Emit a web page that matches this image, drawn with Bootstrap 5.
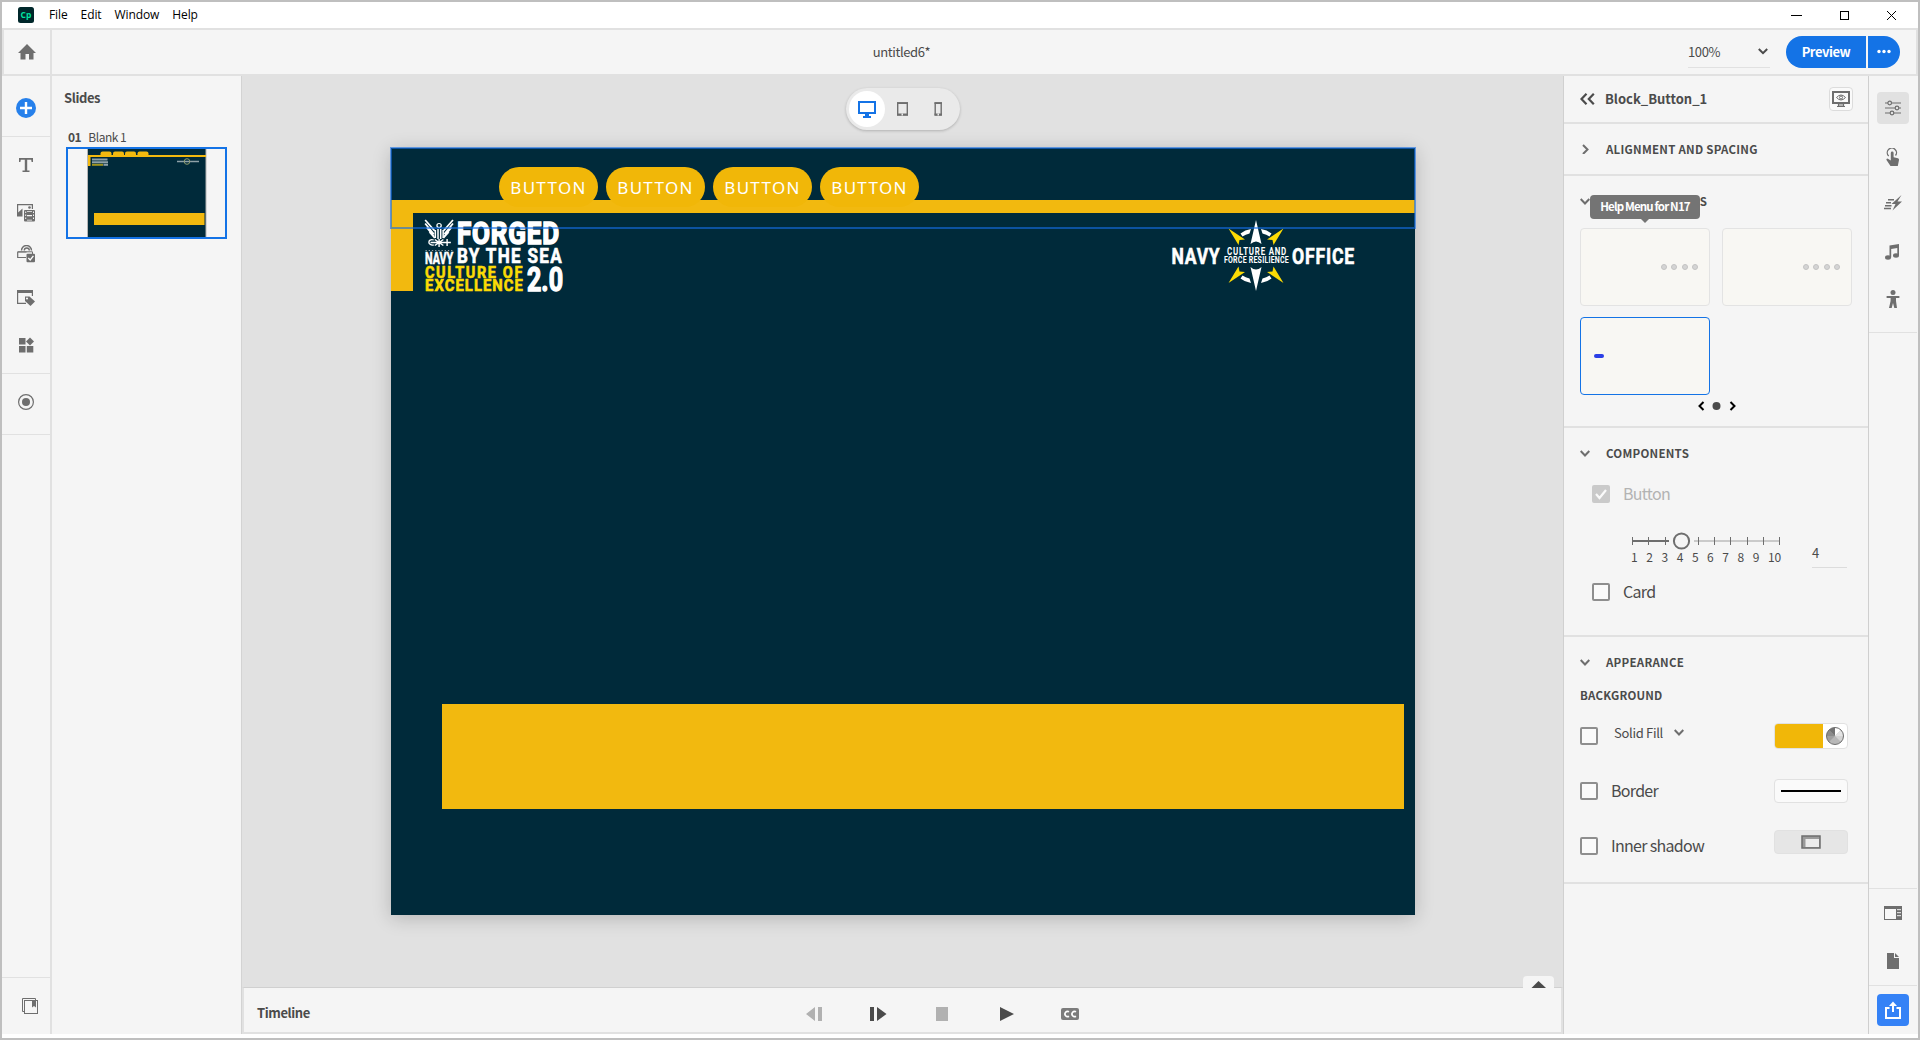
<!DOCTYPE html>
<html lang="en">
<head>
<meta charset="utf-8">
<title>untitled6*</title>
<link href="https://cdn.jsdelivr.net/npm/bootstrap@5.3.0/dist/css/bootstrap.min.css" rel="stylesheet">
<style>
:root{--pane:#f5f5f5;--line:#e1e1e1;--ink:#4b4b4b;--icon:#6e6e6e;--blue:#1473e6;--gold:#f2b90f;--navy:#002a3a}
body{font-family:"Noto Sans CJK SC","Noto Sans",sans-serif;font-size:13px;line-height:20px;color:var(--ink);background:#bfbfbf;overflow:hidden}
svg{display:block;flex:none}
.app{width:1920px;height:1040px;border:2px solid #bfbfbf;background:#fff}
.titlebar{height:26px;padding-left:16px;font-family:"Open Sans","Noto Sans",sans-serif;font-size:12px;color:#000}
.titlebar .menus{margin-left:15px}
.titlebar .menus span{letter-spacing:-.1px;padding-bottom:1px;margin-right:13px}
.winbtns{gap:38px;padding-right:22px}
.toolbar{height:48px;border:2px solid var(--line);background:var(--pane)}
.homecell{width:48px;border-right:2px solid var(--line)}
.docname{padding-left:63px;letter-spacing:-.4px}
.zoomsel{width:82px;height:31px;border-bottom:1px solid var(--line);margin-right:16px;letter-spacing:-.35px}
.zoomsel svg{margin-right:2px}
.btn-preview{height:32px;border-radius:16px 0 0 16px;width:80px;background:var(--blue);color:#fff;font-weight:700;font-size:13px;letter-spacing:-.45px;padding:0;border:0;margin-right:2px}
.btn-more{height:32px;border-radius:0 16px 16px 0;width:32px;background:var(--blue);border:0;padding:0}
.work{height:958px;background:var(--pane)}
.rail{width:50px;flex:none;color:var(--icon)}
.rail hr{margin:0;border:0;height:1px;background:var(--line);opacity:1;flex:none}
.rail .tool{height:40px;flex:none;display:flex;align-items:center;justify-content:center}
.g1{margin-top:1px!important}.g4{margin-top:4px!important}.g6{margin-top:6px!important}.g7{margin-top:7px!important}.g8{margin-top:8px!important}.g9{margin-top:9px!important}.g12{margin-top:12px!important}.g13{margin-top:13px!important}
.rail-l{border-right:2px solid var(--line)}
.rail-r{border-left:1px solid #cfcfcf;padding-right:1px}
.tool .on{background:var(--line);border-radius:4px;width:32px;height:32px}
.tool .share{background:#3582f6;border-radius:4px;width:32px;height:32px}
.slides{width:190px;flex:none;border-right:1px solid #d3d3d3;padding-top:12px}
.slides h6{font-size:13px;font-weight:700;line-height:20px;margin:0 0 20px 12px;letter-spacing:-.4px}
.slides .cap{font-size:12px;margin-left:16px;line-height:18px;height:19px;letter-spacing:-.5px}
.slides .cap b{margin-right:5px}
.thumb{width:161px;height:92px;border:2px solid var(--blue);margin-left:14px}
.stage{width:1322px;flex:none;background:#e1e1e1;border-right:1px solid #d0d0d0}
.devices{width:114px;height:42px;border-radius:21px;background:#eaeaea;box-shadow:0 1px 3px rgba(0,0,0,.22);margin:12px 0 0 604px;padding-left:3px}
.devices .cur{width:36px;height:36px;border-radius:18px;background:#fff}
.slide{width:1024px;height:767px;margin:18px 0 0 149px;background:var(--navy);position:relative;box-shadow:0 3px 18px rgba(0,0,0,.2)}
.slide>*{position:absolute}
.bar-top{left:0;top:52px;width:1024px;height:13px;background:var(--gold)}
.bar-side{left:0;top:52px;width:22px;height:91px;background:var(--gold)}
.bar-low{left:51px;top:556px;width:962px;height:105px;background:var(--gold)}
.tabs{left:108px;top:19px;gap:8px}
.pill{width:99px;height:40px;border-radius:20px;background:#f1b708;color:#fff;font-family:"Noto Sans",sans-serif;font-size:17px;letter-spacing:1.3px;line-height:41px;text-align:center}
.sel{left:-1px;top:-1px;width:1026px;height:82px;border:2px solid rgba(20,110,230,.6)}
.brand{left:0;top:0}
.tl-wrap{height:47px;position:relative;border:2px solid var(--line);border-top:1px solid #d0d0d0;background:var(--pane);margin-top:auto}
.tl-wrap b{position:absolute;left:13px;top:15px;font-size:13px;letter-spacing:-.4px}
.transport{position:absolute;left:562px;top:15px}
.tl-tab{position:absolute;left:1279px;top:-12px;width:31px;height:12px;background:var(--pane);border-radius:4px 4px 0 0}
.props{width:304px;flex:none;position:relative}
.sect{border-bottom:2px solid var(--line);padding-left:16px}
.s-head{height:48px}.s-style{height:252px}.s-comp{height:209px}.s-app{height:247px}
.obj{font-size:13px;font-weight:700;letter-spacing:0;margin-left:10px}
.seebtn{width:24px;height:24px;border:1px solid #dcdcdc;border-radius:4px;background:#fafafa;margin-left:auto;margin-right:15px}
.hd{font-size:11.5px;font-weight:700;letter-spacing:.25px}
.hdrow{height:50px}.hdrow svg{margin-right:16px}
.s-align{height:52px}
.opts{column-gap:12px;row-gap:11px;margin-top:2px}
.opt{width:130px;height:78px;border:1px solid #e3e3e3;border-radius:4px;background:#f8f7f3;flex:none}
.opt.cur{border-color:var(--blue)}
.dots{gap:4.4px;padding-right:11px}
.dots i{width:6px;height:6px;border-radius:3px;background:#d4d4d4;border:1.500px solid #c3c3c3}
.bluebit{width:10px;height:4px;border-radius:2px;background:#2b3fe6;margin-left:13px}
.pager{margin:6px 0 0 117px}
.tip{position:absolute;left:26px;top:119px;width:110px;height:24px;border-radius:4px;background:#747474;color:#fff;font-size:11.5px;font-weight:700;line-height:23px;text-align:center;letter-spacing:-.85px}
.tip svg{position:absolute;left:51px;top:24px}
.cbx{width:18px;height:18px;border:2px solid #8e8e8e;border-radius:2px;background:#fafafa;flex:none}
.cbx.off{background:#cacaca;border-color:#cacaca}
.big{font-size:16px;letter-spacing:-.7px;margin-left:13px;margin-top:-2px}
.muted{color:#b3b3b3}
.crow{height:32px;padding-left:12px}
.card-row{margin-top:1px}
.sliderrow{padding-left:52px;margin-top:22px;height:43px}
.ticks{width:150px;font-size:12px;line-height:16px;letter-spacing:-.2px}
.nums{margin:-1px 1px 0 -1px}
.numbox{width:35px;height:28px;border-bottom:1px solid #dcdcdc;font-size:13px;margin:8px 0 0 30px;line-height:26px}
.bgh{line-height:16px;letter-spacing:.2px}
.approw{height:55px}
.bgh+.approw{margin-top:5px}
.fillname{margin:-6px 0 0 16px;letter-spacing:-.3px}
.fillchev{margin:-7px 0 0 11px}
.well{width:74px;height:26px;border:1px solid var(--line);border-radius:4px;background:#fafafa;margin-left:auto;margin-right:20px;overflow:hidden}
.well .fill{width:48px;height:24px;background:#f1b708}
.w-b{height:24px}.w-s{height:24px;background:#e6e6e6;margin-top:-7px}
</style>
<script src="https://cdn.jsdelivr.net/npm/bootstrap@5.3.0/dist/js/bootstrap.bundle.min.js"></script>
</head>
<body>
<div class="app d-flex flex-column">
  <header class="titlebar d-flex align-items-center">
    <svg width="16" height="16"><rect width="16" height="16" rx="2.500" fill="#00272b"/><text x="8" y="11" text-anchor="middle" font-family="Open Sans" font-weight="700" font-size="8.500" fill="#00e3a0">Cp</text></svg>
    <nav class="menus d-flex"><span>File</span><span>Edit</span><span>Window</span><span>Help</span></nav>
    <div class="winbtns d-flex align-items-center ms-auto">
      <svg width="11" height="10"><path d="M0 5.500h11" stroke="#000"/></svg>
      <svg width="9" height="9"><rect x=".5" y=".5" width="8" height="8" fill="none" stroke="#000"/></svg>
      <svg width="9" height="9"><path d="M0 0l9 9M9 0L0 9" stroke="#000"/></svg>
    </div>
  </header>
  <div class="toolbar d-flex align-items-center">
    <div class="homecell h-100 d-flex align-items-center justify-content-center"><svg width="18" height="16"><path d="M9 0L18 9H15.500V15.500H11V10H7.500V15.500H2.500V9H0z" fill="#6e6e6e"/></svg></div>
    <div class="flex-grow-1 text-center docname">untitled6*</div>
    <div class="zoomsel d-flex align-items-center justify-content-between"><span>100%</span><svg width="10" height="7"><path d="M.8 1L5 5.200L9.200 1" fill="none" stroke="#4b4b4b" stroke-width="2"/></svg></div>
    <button class="btn btn-preview">Preview</button><button class="btn btn-more"><svg width="32" height="32" fill="#fff"><circle cx="11" cy="15.500" r="1.700"/><circle cx="16" cy="15.500" r="1.700"/><circle cx="21" cy="15.500" r="1.700"/></svg></button>
    <span class="pe-3"></span>
  </div>
  <main class="work d-flex">
    <nav class="rail rail-l d-flex flex-column">
      <div class="tool g12"><svg width="20" height="20"><circle cx="10" cy="10" r="10" fill="#2680eb"/><path d="M10 4v12M4 10h12" stroke="#fff" stroke-width="2.400"/></svg></div>
      <hr class="g8">
      <div class="tool g8"><svg width="15" height="14" fill="currentColor"><path d="M0 0H14V4H12.600L12.200 1.800H8.200V12.400H10.500V14H3.500V12.400H5.800V1.800H1.800L1.400 4H0z"/></svg></div>
      <div class="tool g8"><svg width="18" height="18" fill="currentColor"><path d="M0 0H16V5H14.800V1.200H1.200V8.500L5.500 4.500V12.500H0z"/><circle cx="12.500" cy="3.500" r="1.300"/><rect x="7" y="6" width="11" height="11.500" rx="1"/><path d="M8.200 7.500h1v1.500h-1zM8.200 10.500h1v1.500h-1zM8.200 13.500h1v1.500h-1zM16 7.500h1v1.500h-1zM16 10.500h1v1.500h-1zM16 13.500h1v1.500h-1zM10 7h5v.8h-5zM10 11h5v1.200h-5zM10 15.700h5v.8h-5z" fill="#f5f5f5"/></svg></div>
      <div class="tool g1"><svg width="18" height="18" fill="none" stroke="currentColor"><path d="M4.500 5.500A5 5 0 0 1 14.500 5.500M7.300 5.500A2.400 2.400 0 0 1 12.300 5.500" stroke-width="1.400"/><path d="M9.500 7H.7V12.500H9" stroke-width="1.200"/><path d="M1 6.800H15.500V9" stroke-width="1"/><rect x="9.500" y="8.800" width="8.500" height="8.500" rx="1" fill="currentColor" stroke="none"/><path d="M11.300 13L13.200 15L16.400 10.800" stroke="#fff" stroke-width="1.300"/></svg></div>
      <div class="tool g4"><svg width="18" height="16" fill="currentColor"><path d="M0 0H16V6H14.800V3H1.200V12.700H9V14H0z"/><path d="M8 6.500H12.500L18 11.500L13.500 16L8 11z"/><circle cx="10" cy="8.500" r="1" fill="#fff"/></svg></div>
      <div class="tool g7"><svg width="16" height="16" fill="currentColor"><rect x="1" y="1" width="6.500" height="6.500"/><rect x="1" y="9" width="6.500" height="6.500"/><rect x="8.800" y="9" width="6.500" height="6.500"/><path d="M12 .5L16 4.500L12 8.500L8 4.500z"/></svg></div>
      <hr class="g8">
      <div class="tool g8"><svg width="16" height="16"><circle cx="8" cy="8" r="7.400" fill="none" stroke="currentColor" stroke-width="1.200"/><circle cx="8" cy="8" r="4" fill="currentColor"/></svg></div>
      <hr class="g12">
      <hr class="mt-auto">
      <div class="tool g8 mb-2 ps-2"><svg width="16" height="16" fill="none" stroke="currentColor"><path d="M2.500 13.500H.5V.5H13.500V2.500"/><rect x="2.500" y="2.500" width="13" height="13"/><path d="M10 2.500H14V9.500L12 8L10 9.500z" fill="currentColor" stroke="none"/></svg></div>
    </nav>
    <aside class="slides">
      <h6>Slides</h6>
      <div class="cap"><b>01</b> Blank 1</div>
      <div class="thumb"><svg width="157" height="88"><rect x="20" width="118" height="88" fill="#002a3a"/><path d="M19.500 0V88M138 0V88" stroke="#b5b5b5"/><g fill="#f2b90f"><rect x="20" y="6" width="118" height="2"/><rect x="20" y="6" width="2.500" height="11"/><rect x="32.500" y="2.500" width="11" height="5" rx="2"/><rect x="45" y="2.500" width="11" height="5" rx="2"/><rect x="57" y="2.500" width="11" height="5" rx="2"/><rect x="69.500" y="2.500" width="11" height="5" rx="2"/><rect x="26" y="64" width="110.500" height="12"/></g><g stroke="#8fa1a8" stroke-width="2"><path d="M24 10.500H39.500M24 13.200H40"/><path d="M24 15.800H35" stroke="#a0941f"/><path d="M35.500 15.800H40"/><path d="M109 12.500H131" stroke-width="1.500"/></g><circle cx="119" cy="12.500" r="2.800" fill="none" stroke="#8b9a6c"/></svg></div>
    </aside>
    <section class="stage d-flex flex-column">
      <div class="devices d-flex align-items-center">
        <div class="cur d-flex align-items-center justify-content-center"><svg width="18" height="17" fill="#1473e6"><path d="M0 0H18V13H11V15H13V17H5V15H7V13H0zM2 2V11H16V2z" fill-rule="evenodd"/></svg></div>
        <svg width="74" height="16" fill="none" stroke="#6e6e6e"><rect x="12.700" y="2" width="9.600" height="12" stroke-width="1.400"/><path d="M12 2.200H23M12 13.500H23" stroke-width="1.800"/><path d="M16.500 13.500h1.500" stroke="#eaeaea" stroke-width="2"/><rect x="50.200" y="2" width="6" height="12" stroke-width="1.400"/><path d="M49.500 2.200H57M49.500 13.500H57" stroke-width="1.800"/><path d="M52.500 13.500h1.500" stroke="#eaeaea" stroke-width="2"/></svg>
      </div>
      <div class="slide">
        <div class="bar-top"></div><div class="bar-side"></div><div class="bar-low"></div>
        <div class="tabs d-flex"><div class="pill">BUTTON</div><div class="pill">BUTTON</div><div class="pill">BUTTON</div><div class="pill">BUTTON</div></div>
        <svg class="brand" width="1024" height="160" font-family="Roboto,Liberation Sans,sans-serif" font-weight="700" fill="#fff" stroke-width=".6">
          <g stroke="#fff">
            <text x="66" y="95.500" font-size="32" letter-spacing="1" textLength="103" lengthAdjust="spacingAndGlyphs" stroke-width="1.600">FORGED</text>
            <text x="66" y="115" font-size="19.500" letter-spacing="1.500" textLength="106" lengthAdjust="spacingAndGlyphs">BY THE SEA</text>
            <text x="34" y="116" font-size="16" textLength="28" lengthAdjust="spacingAndGlyphs">NAVY</text>
            <text x="136" y="142.500" font-size="33" textLength="36" lengthAdjust="spacingAndGlyphs" stroke-width="1.400">2.0</text>
            <text x="780.500" y="115.500" font-size="22.500" letter-spacing="1" textLength="49" lengthAdjust="spacingAndGlyphs">NAVY</text>
            <text x="901" y="115.500" font-size="22.500" letter-spacing="1" textLength="63" lengthAdjust="spacingAndGlyphs">OFFICE</text>
          </g>
          <g fill="#fbdb05" stroke="#fbdb05" font-size="16"><text x="34" y="129.500" letter-spacing="1.800" textLength="99" lengthAdjust="spacingAndGlyphs">CULTURE OF</text><text x="34" y="142.500" letter-spacing="1.200" textLength="99" lengthAdjust="spacingAndGlyphs">EXCELLENCE</text></g>
          <g font-size="10"><text x="836" y="106.500" letter-spacing="1" textLength="60" lengthAdjust="spacingAndGlyphs">CULTURE AND</text><text x="833" y="115" font-size="9.500" letter-spacing=".3" textLength="65" lengthAdjust="spacingAndGlyphs">FORCE RESILIENCE</text></g>
          <path d="M34.500 102.500H62" stroke="#fff" stroke-width="1.200" stroke-dasharray="1.300 1.900" opacity=".55"/>
          <g fill="none" stroke="#fff" stroke-width="1.600" transform="matrix(1.070 0 0 1 1 0)">
            <path d="M31 72L40 83M31 75.500L39 86M32.500 79.500L39 88M35 84L40 90M57 72L48 83M57 75.500L49 86M55.500 79.500L49 88M53 84L48 90"/>
            <circle cx="44" cy="77.500" r="2" stroke-width="1.200"/>
            <path d="M40.500 82V90M43 81V91M45.500 81V91M47.800 82V90" stroke-width="1.400"/>
            <path d="M39 92C33 90 33 98 39 97M36 94.500H55M51.500 91V98M40 97.500L48 91.500M40 91.500L48 97.500M44 91V99" stroke-width="1.300"/>
          </g>
          <path d="M865 72L870.500 96Q865 91 859.500 96zM865 143L870.500 119Q865 124 859.500 119z"/>
          <path d="M849.500 85.500Q854 81.800 860 81L858.500 85.500Q854.500 86.500 851.500 88.500zM880.500 85.500Q876 81.800 870 81L871.500 85.500Q875.500 86.500 878.500 88.500zM849.500 130.500Q854 134.200 860 135L858.500 130.500Q854.500 129.500 851.500 127.500zM880.500 130.500Q876 134.200 870 135L871.500 130.500Q875.500 129.500 878.500 127.500z"/>
          <g fill="#fbdb05"><path id="ray" d="M837.500 80.500L854 91.500L848.500 92L847.500 97z"/><use href="#ray" transform="matrix(-1 0 0 1 1730 0)"/><use href="#ray" transform="matrix(1 0 0 -1 0 215.500)"/><use href="#ray" transform="matrix(-1 0 0 -1 1730 215.500)"/></g>
        </svg>
        <div class="sel"></div>
      </div>
      <footer class="tl-wrap">
        <b>Timeline</b>
        <svg class="transport" width="280" height="22"><g fill="#b1b1b1"><path d="M0 11L9 4V18zM12 4h4v14h-4zM130 4h12v14h-12z"/></g><g fill="#4b4b4b"><path d="M64 4h4v14h-4zM71 4L80.500 11L71 18zM194 4L208 11L194 18z"/></g><rect x="255" y="5" width="18" height="12" rx="2" fill="#7c7c7c"/><path d="M263 8.800A2.600 2.600 0 1 0 263 13.200M270 8.800A2.600 2.600 0 1 0 270 13.200" fill="none" stroke="#fff" stroke-width="1.700"/></svg>
        <div class="tl-tab"><svg width="31" height="12"><path d="M8.500 12L15.500 5L23 12z" fill="#4b4b4b"/></svg></div>
      </footer>
    </section>
    <aside class="props">
      <div class="sect s-head d-flex align-items-center">
        <svg width="15" height="12" fill="none" stroke="#4b4b4b" stroke-width="2.200"><path d="M6.500 .8L1.500 6L6.500 11.200M13.800 .8L8.800 6L13.800 11.200"/></svg>
        <span class="obj">Block_Button_1</span>
        <div class="seebtn d-flex align-items-center justify-content-center"><svg width="18" height="18" fill="none" stroke="#6e6e6e"><rect x="1" y="2" width="16" height="11" stroke-width="2"/><path d="M6.500 14h5v2h-5zM5 16.500h8" stroke-width="1.200"/><path d="M4.500 7.500Q9 2.500 13.500 7.500Q9 12.500 4.500 7.500z"/><circle cx="9" cy="7.500" r="1.500"/></svg></div>
      </div>
      <div class="sect hdrow s-align d-flex align-items-center"><svg width="10" height="10" fill="none" stroke="#6e6e6e" stroke-width="2"><path d="M3 1L7.500 5.500L3 10"/></svg><span class="hd">ALIGNMENT AND SPACING</span></div>
      <div class="sect s-style">
        <div class="hdrow d-flex align-items-center"><svg width="10" height="7" fill="none" stroke="#6e6e6e" stroke-width="2"><path d="M.7 1L5 5.500L9.300 1"/></svg><span class="hd">DESIGN OPTIONS</span></div>
        <div class="d-flex flex-wrap opts">
          <div class="opt dots d-flex align-items-center justify-content-end"><i></i><i></i><i></i><i></i></div>
          <div class="opt dots d-flex align-items-center justify-content-end"><i></i><i></i><i></i><i></i></div>
          <div class="opt cur d-flex align-items-center"><div class="bluebit"></div></div>
        </div>
        <div class="pager"><svg width="40" height="10" fill="none" stroke="#000" stroke-width="2"><path d="M6.500 1L2.500 5L6.500 9M33.500 1L37.500 5L33.500 9"/><circle cx="19.500" cy="5" r="4" fill="#4b4b4b" stroke="none"/></svg></div>
      </div>
      <div class="sect s-comp">
        <div class="hdrow d-flex align-items-center"><svg width="10" height="7" fill="none" stroke="#6e6e6e" stroke-width="2"><path d="M.7 1L5 5.500L9.300 1"/></svg><span class="hd">COMPONENTS</span></div>
        <div class="crow d-flex align-items-center"><div class="cbx off"><svg width="14" height="14" fill="none" stroke="#fafafa" stroke-width="2.200"><path d="M2 7L5.500 11L12 3"/></svg></div><span class="big muted">Button</span></div>
        <div class="d-flex sliderrow">
          <div class="ticks"><svg width="150" height="18" stroke="#6e6e6e" fill="none"><path d="M1 9H37" stroke-width="2"/><path d="M62 9H148" stroke="#cacaca" stroke-width="2"/><path d="M.5 5v8M16.500 5v8M33.500 5v8M66.500 5v8M82.500 5v8M98.500 5v8M115.500 5v8M131.500 5v8M147.500 5v8"/><circle cx="49.500" cy="9" r="7.600" stroke-width="2"/></svg>
            <div class="nums d-flex justify-content-between"><span>1</span><span>2</span><span>3</span><span>4</span><span>5</span><span>6</span><span>7</span><span>8</span><span>9</span><span>10</span></div></div>
          <div class="numbox">4</div>
        </div>
        <div class="crow card-row d-flex align-items-center"><div class="cbx"></div><span class="big">Card</span></div>
      </div>
      <div class="sect s-app">
        <div class="hdrow d-flex align-items-center"><svg width="10" height="7" fill="none" stroke="#6e6e6e" stroke-width="2"><path d="M.7 1L5 5.500L9.300 1"/></svg><span class="hd">APPEARANCE</span></div>
        <div class="hd bgh">BACKGROUND</div>
        <div class="approw d-flex align-items-center"><div class="cbx"></div><span class="fillname">Solid Fill</span><svg class="fillchev" width="10" height="7" fill="none" stroke="#6e6e6e" stroke-width="2"><path d="M.7 1L5 5.500L9.300 1"/></svg>
          <div class="well d-flex bg-white"><div class="fill"></div><svg width="24" height="24"><circle cx="12" cy="12" r="8.500" fill="#b8b8b8"/><path d="M12 12V3.500A8.500 8.500 0 0 1 18 6z" fill="#fff"/><path d="M12 12L18 6A8.500 8.500 0 0 1 20.500 12z" fill="#e4e4e4"/><path d="M12 12H20.500A8.500 8.500 0 0 1 18 18z" fill="#d4d4d4"/><path d="M12 12H3.500A8.500 8.500 0 0 1 6 6z" fill="#8c8c8c"/><path d="M12 12L6 6A8.500 8.500 0 0 1 12 3.500z" fill="#747474"/><path d="M12 12H3.500A8.500 8.500 0 0 0 6 18z" fill="#a0a0a0"/><circle cx="12" cy="12" r="8.500" fill="none" stroke="#6e6e6e"/></svg></div></div>
        <div class="approw d-flex align-items-center"><div class="cbx"></div><span class="big">Border</span><div class="well w-b d-flex align-items-center justify-content-center"><svg width="60" height="2"><rect width="60" height="2"/></svg></div></div>
        <div class="approw d-flex align-items-center"><div class="cbx"></div><span class="big">Inner shadow</span><div class="well w-s d-flex align-items-center justify-content-center"><svg width="20" height="14"><rect x="1" y="1" width="18" height="12" fill="#9a9a9a" stroke="#6e6e6e" stroke-width="1.500"/><rect x="4.500" y="4" width="13.500" height="8" fill="#ececec"/></svg></div></div>
      </div>
      <div class="tip">Help Menu for N17<svg width="8" height="4"><path d="M0 0H8L4 4z" fill="#747474"/></svg></div>
    </aside>
    <nav class="rail rail-r d-flex flex-column">
      <div class="tool g12"><div class="on d-flex align-items-center justify-content-center"><svg width="18" height="16" fill="none" stroke="#6e6e6e" stroke-width="1.200"><path d="M1 3H4M7.500 3H17M1 8H11M15 8H17M1 13H6M10 13H17"/><circle cx="5.700" cy="3" r="1.800"/><circle cx="13" cy="8" r="1.800"/><circle cx="8" cy="13" r="1.800"/></svg></div></div>
      <div class="tool g9"><svg width="16" height="18" fill="#6e6e6e"><path d="M3.700 8A4.600 4.600 0 1 1 10.500 7.500" fill="none" stroke="#6e6e6e" stroke-width="1.300"/><path d="M5.800 5A1.400 1.400 0 0 1 8.600 5V9.300L13 10.200Q14.300 10.600 14 12L12.800 18H5.500L1.500 12Q.8 10.600 2.500 10.500L5.800 12.500z"/></svg></div>
      <div class="tool g6"><svg width="18" height="16" fill="#6e6e6e"><path d="M17.500 0L7.500 9H11.500L8.500 15.500L18 6.500H13.500z"/><path d="M4 4.700H10M2 7.700H7M1 10.700H7.500M0 13.500H7" stroke="#6e6e6e" stroke-width="1.500"/></svg></div>
      <div class="tool g9"><svg width="16" height="16" fill="#6e6e6e"><path d="M4.500 1.500L14 0V11.500H12.300V4L6.200 5V13.500H4.500z"/><ellipse cx="3" cy="13.500" rx="3" ry="2.200"/><ellipse cx="11" cy="11.500" rx="3" ry="2.200"/></svg></div>
      <div class="tool g7"><svg width="14" height="18" fill="#6e6e6e"><circle cx="7" cy="2.500" r="2.500"/><path d="M.8 6H13.200Q14 6.800 13.200 8H10V11L11 18H8.300L7 13L5.700 18H3L4.600 11V8H.8Q0 6.800 .8 6z"/></svg></div>
      <hr class="g13">
      <hr class="mt-auto">
      <div class="tool g4"><svg width="18" height="14"><rect width="18" height="14" fill="#6e6e6e"/><path d="M1 3h11v10H1z" fill="#f8f8f8"/><path d="M13 3.700h4M13 6.700h4M13 9.700h4" stroke="#f5f5f5"/></svg></div>
      <div class="tool g8"><svg width="12" height="16" fill="#6e6e6e"><path d="M0 0H7V5H12V16H0zM8 0L12 4H8z"/></svg></div>
      <hr class="g4">
      <div class="tool g4 mb-1"><div class="share d-flex align-items-center justify-content-center"><svg width="16" height="18" fill="none" stroke="#fff" stroke-width="2"><path d="M4.500 7H1V17H15V7H11.500M8 11V3"/><path d="M4 5L8 .5L12 5z" fill="#fff" stroke="none"/></svg></div></div>
    </nav>
  </main>
</div>
</body>
</html>
